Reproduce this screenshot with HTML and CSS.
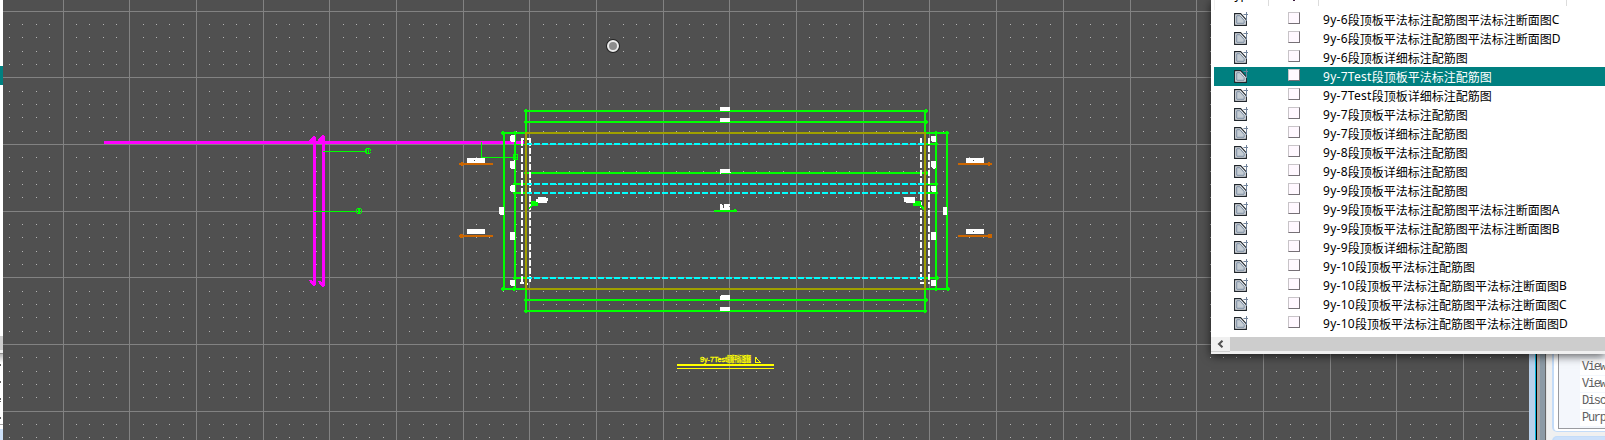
FILE: index.html
```
<!DOCTYPE html>
<html lang="zh">
<head>
<meta charset="utf-8">
<title>9y-7Test段顶板平法标注配筋图</title>
<link rel="stylesheet" href="styles.css">
</head>
<body>
<div class="workspace">
  <div class="left-edge">
    <div class="le-selected"></div>
    <div class="le-thumb"></div>
    <div class="le-frame"></div>
    <div class="le-list"><i></i><i></i><i class="colon"></i><i></i></div>
    <div class="le-foot"></div>
  </div>
  <svg class="drawing" viewBox="3 0 1526 440" width="1526" height="440" shape-rendering="crispEdges">
    <path id="dots" fill="#b4b4b4"/>
    <path id="grid" fill="#828282"/>
    <g fill="#ff00ff">
      <path d="M104 141h420v3H104zM313 137h3v148h-3zM322 136h3v149h-3z"/>
      <path d="M309 142v-2l4-4h2l1 2v4zM318 141v-2l4-4h2l1 2v4zM309 280h2l2 2h3v3l-2 1-3-2zM318 281h2l2 2h3v3l-2 1-3-2z"/>
    </g>
    <g fill="#00ff00">
      <path d="M323 151h43v1h-43zM314 211h42v1h-42zM481 142h1v16h-1zM481 157h32v1h-32z"/>
      <path d="M525 110h402v2H525zM525 121h402v2H525zM525 172h402v2H525zM526 299h400v2H526zM526 310h400v2H526z"/>
      <path d="M525 110h2v23h-2zM924 110h2v23h-2zM525 289h2v24h-2zM924 289h2v24h-2zM525 173h2v11h-2zM924 173h2v11h-2z"/>
      <path d="M503 132h2v158h-2zM514 132h2v158h-2zM935 132h2v158h-2zM946 132h2v158h-2z"/>
      <path d="M503 132h22v2h-22zM926 132h22v2h-22zM503 288h22v2h-22zM926 288h22v2h-22z"/>
      <path d="M514 144h11v1h-11zM514 183h11v2h-11zM514 192h11v2h-11zM514 277h13v2h-13zM926 143h11v2h-11zM926 183h11v2h-11zM926 192h11v2h-11zM924 277h13v2h-13z"/>
      <path d="M714 210h23v2h-23zM734 209h2v1h-2z"/>
      <path id="ticks"/>
      <path d="M366 148h4v1h-4zM365 149h2v4h-2zM366 153h4v1h-4zM368 148h1v6h-1zM370 149h1v2h-1zM370 152h1v1h-1z"/>
      <path d="M357 208h4v1h-4zM356 209h1v4h-1zM357 213h4v1h-4zM358 208h2v6h-2zM361 209h1v4h-1z"/>
    </g>
    <g fill="none" stroke="#00ff00">
      <path d="M513 154.500h4v5h-4zM513 157h5"/>
    </g>
    <g fill="none" stroke="#ffffff" stroke-width="2">
      <path d="M522 140v144M530 140v144M921 138v146M929 138v146" stroke-dasharray="6 2"/>
      <path d="M521 139h3M526 139h5M520 283h4M526 284h2M929 139h1M921 283h5M928 283h2"/>
    </g>
    <path fill="#a0a000" d="M525 132h401v158H525zM527 134v154h397V134z"/>
    <path fill="none" stroke="#00ffff" stroke-width="2" stroke-dasharray="6 2" stroke-dashoffset="1" d="M527 144h397M527 184h397M527 193h397M527 278h397"/>
    <path fill="#00ff00" d="M531 201h7v5h-5l-4 3-1-1 3-3zM913 201h8v4l3 3v2h-1l-4-4h-6z"/>
    <g fill="#ffffff">
      <path d="M720 107h10v4h-10zM720 118h10v4h-10zM720 169h10v3h1v1h-10v1h-1zM721 295h9v5h-10v-4h1zM720 307h10v4h-10z"/>
      <path d="M720 204h2v1h1v3h1v-4h6v2h-1v1h1v3h-10z"/>
      <path d="M511 135h4v7h-4l-1-1v-5zM510 161h4v-1l1 1v8h-3l-2-1zM510 186h1v-1h4v7h-4l-1-1zM499 207h5v8h-4l-1-1zM510 232h5v8h-5zM510 280h5v6h-4l-1-1z"/>
      <path d="M931 136h4l1 1v4l-1 1h-3l-1-1zM931 161h4l1 1v5l-2 2-3-2zM931 186h4l1 1v5h-4l-1-1zM943 207h4v8h-4zM931 232h5v7l-1 1h-4zM931 280h5v5l-1 1h-4z"/>
      <path d="M538 197h8v1h2v3h-1v2h-9v-1h-2v-3h2zM904 197h11v6h-9v-1h-2z"/>
      <path id="tags"/>
    </g>
    <path fill="#505050" d="M474 160h1v1h-1zM973 160h1v1h-1zM973 231h1v1h-1z"/>
    <path fill="#cc6600" d="M459 163h2v-1h2v1h30v2h-30v1h-2v-1h-2zM459 235l1-1h3v1h30v2h-30v1h-3l-1-1zM958 163h30v-1h2v1h2v2h-2v1h-2v-1h-30zM958 235h30v-1h3l1 1v2l-1 1h-3v-1h-30z"/>
    <g fill="#ffff00">
      <path d="M677 364h97v2h-97zM677 368h97v1h-97z"/>
      <path d="M755 357h1v1h1v1h1v1h1v1h1v1h1v1h-6zM756 359v3h3v-1h-1v-1h-1v-1z"/>
      <text class="caption" x="700" y="362" textLength="27" lengthAdjust="spacingAndGlyphs">9y-7Test</text>
      <text class="caption caption-cjk" x="727" y="362" textLength="24" lengthAdjust="spacingAndGlyphs">段顶板平法标注配筋图</text>
    </g>
    <circle cx="613" cy="46" r="5.500" shape-rendering="auto" fill="#8c8c8c" stroke="#242424" stroke-width="3"/>
    <circle cx="613" cy="46" r="5" shape-rendering="auto" fill="#8c8c8c" stroke="#ececec" stroke-width="2"/>
  </svg>
  <div class="splitter"><i class="s1"></i><i class="s2"></i><i class="s3"></i><i class="s4"></i><i class="s5"></i><i class="s6"></i></div>
  <div class="side">
    <div class="group">
      <div class="props"><div>View</div><div>View</div><div>Disc</div><div>Purp</div></div>
    </div>
    <div class="group next"></div>
  </div>
</div>

<div class="browser">
  <div class="head"><span class="h-type">Type</span><span class="h-check"></span><span class="h-name"></span></div>
  <div class="rows" id="rows"></div>
  <div class="scroll">
    <div class="arrow"><svg width="7" height="8" viewBox="0 0 7 8"><path d="M5.500 .7 2 4l3.500 3.300" fill="none" stroke="#505050" stroke-width="2"/></svg></div>
    <div class="thumb"></div>
  </div>
</div>
<script src="app.js"></script>
</body>
</html>
```
FILE: styles.css
```
body { margin: 0; width: 1605px; height: 440px; overflow: hidden; position: relative; background: #f0f0f0; font-family: "Noto Sans", "Noto Sans CJK SC", sans-serif; }
.workspace { display: flex; height: 440px; }
.left-edge { width: 3px; height: 440px; flex: none; background: #fff; display: flex; flex-direction: column; overflow: hidden; }
.le-selected { height: 19px; margin-top: 66px; background: #008080; flex: none; }
.le-thumb { height: 14px; margin-top: 251px; background: #cdcdcd; flex: none; }
.le-frame { height: 13px; flex: none; background: linear-gradient(#f0f0f0 0 3px, #8c8c8c 3px 4px, #b8b8b8 4px, #fff); }
.le-list { height: 62px; flex: none; border-bottom: 1px solid #a0a0a0; display: flex; flex-direction: column; gap: 15px; padding-top: 1px; box-sizing: border-box; }
.le-list i { width: 1px; height: 2px; background: #606060; flex: none; }
.le-list i.colon { height: 4px; background: linear-gradient(#606060 0 2px, #fff 2px 3px, #606060 3px); }
.le-foot { flex: 1; margin-top: 4px; background: #cce0f8; }
.drawing { flex: none; display: block; background: #505050; }
.caption { font: 8px "Liberation Sans", sans-serif; stroke: #ffff00; stroke-width: .3px; }
.caption-cjk { font: bold 8px "Noto Sans CJK SC", sans-serif; }
.splitter { display: flex; flex: none; }
.splitter i { height: 440px; }
.s1 { width: 6px; background: #bad1ea; }
.s2 { width: 1px; background: #00b4dc; }
.s3 { width: 1px; background: #000; }
.s4 { width: 3px; background: #aea6a3; }
.s5 { width: 5px; background: #8c9aa5; }
.s6 { width: 2px; background: linear-gradient(90deg, #666 1px, #e4e4e4 1px); }
.side { flex: 1; padding: 300px 0 0 5px; overflow: hidden; box-sizing: border-box; background: #f0f0f0; }
.group { height: 132px; box-sizing: border-box; border: 1px solid #c4dcf8; border-left-width: 2px; border-right: 0; border-bottom-left-radius: 5px; background: #fff; padding: 0 0 3px 4px; }
.group.next { margin-top: 4px; background: #cce0fa; border-radius: 5px 0 0 0; }
.props { height: 128px; box-sizing: border-box; border: 1px solid #999ba0; border-right: 0; border-top: 0; background: #f4f7fc; padding: 58px 0 0 21px; font: 12px/17px "Liberation Mono", monospace; letter-spacing: -1.3px; color: #606060; display: flex; flex-direction: column; gap: 1px; }
.props div { height: 16px; background: #fff; padding-left: 2px; flex: none; }
.browser { position: absolute; left: 1211px; top: 0; width: 394px; height: 354px; background: #fff; box-shadow: 0 2px 9px rgba(0,0,0,.65); display: flex; flex-direction: column; }
.head { height: 10px; overflow: hidden; display: flex; font-size: 12px; flex: none; background: linear-gradient(90deg, #fff 0 3px, #f0f0f0 3px 4px, #fff 4px); }
.head span { height: 6px; border-right: 1px solid #dcdcdc; box-sizing: border-box; }
.h-type { width: 58px; padding-left: 17px; line-height: 16px; margin-top: -13px; }
.head .h-type { height: 19px; }
.h-check { width: 50px; background: linear-gradient(#402040, #402040) 24px 0 / 2px 1px no-repeat; }
.h-name { width: 248px; }
.row { height: 19px; margin-left: 3px; display: flex; align-items: flex-start; font-size: 12px; line-height: 19px; color: #000; }
.row.selected { background: #008080; color: #fff; }
.icon { width: 14px; height: 14px; margin: 2px 0 0 20px; flex: none; }
.box { width: 12px; height: 12px; box-sizing: border-box; background: #fff8ff; border: 1px solid #c8c4c8; border-right: 1px solid #767076; border-bottom: 1px solid #767076; margin: 2px 23px 0 40px; flex: none; }
.name { white-space: nowrap; display: flex; }
.latin { letter-spacing: .28px; }
.cjk { font-family: "Noto Sans CJK SC", sans-serif; }
.scroll { margin-top: 4px; height: 17px; display: flex; background: #f0f0f0; flex: none; }
.arrow { width: 19px; height: 15px; padding-right: 1px; padding-bottom: 1px; box-sizing: border-box; display: flex; align-items: center; justify-content: center; border-bottom: 1px solid #d0d0d0; }
.thumb { flex: 1; height: 14px; background: #cdcdcd; }
```
FILE: app.js
```
// Drawing grid: major lines with four snap dots in between.
const pitch = 66.69, rowPitch = 66.67;
let grid = '', dots = '';
for (let i = 0; i < 23; i++) grid += `M${Math.floor(63 + pitch * i)} 0h1v440h-1z`;
for (let j = 0; j < 7; j++) grid += `M3 ${Math.floor(11 + rowPitch * j)}h1526v1H3z`;
for (let i = -5; i < 112; i++) {
  if (i % 5 === 0) continue;
  for (let j = 0; j < 33; j++) {
    if (j % 5 === 0) continue;
    dots += `M${Math.floor(63.01 + pitch * i / 5)} ${Math.floor(11.01 + rowPitch * j / 5)}h1v1h-1z`;
  }
}
document.getElementById('grid').setAttribute('d', grid);
document.getElementById('dots').setAttribute('d', dots);

// Dimension ticks at line ends.
const ticks = [[526,111],[526,122],[503,133],[515,133],[526,173],[515,184],[515,193],[515,278],[503,289],[514,289],[526,300],[526,311],
  [926,111],[926,122],[936,133],[947,133],[926,173],[936,144],[936,184],[936,193],[937,278],[936,289],[948,289],[926,300],[925,311]];
document.getElementById('ticks').setAttribute('d', ticks.map(([x, y]) => `M${x - 1} ${y - 2}h2v1h1v2h-1v1h-2v-1h-1v-2h1z`).join(''));

// Section mark tags.
document.getElementById('tags').setAttribute('d', [[467,158],[467,229],[966,158],[966,229]]
  .map(([x, y]) => `M${x} ${y}h18v5h-18z`).join(''));

const items = [
  ['9y-6', '段顶板平法标注配筋图平法标注断面图', 'C'],
  ['9y-6', '段顶板平法标注配筋图平法标注断面图', 'D'],
  ['9y-6', '段顶板详细标注配筋图', ''],
  ['9y-7Test', '段顶板平法标注配筋图', ''],
  ['9y-7Test', '段顶板详细标注配筋图', ''],
  ['9y-7', '段顶板平法标注配筋图', ''],
  ['9y-7', '段顶板详细标注配筋图', ''],
  ['9y-8', '段顶板平法标注配筋图', ''],
  ['9y-8', '段顶板详细标注配筋图', ''],
  ['9y-9', '段顶板平法标注配筋图', ''],
  ['9y-9', '段顶板平法标注配筋图平法标注断面图', 'A'],
  ['9y-9', '段顶板平法标注配筋图平法标注断面图', 'B'],
  ['9y-9', '段顶板详细标注配筋图', ''],
  ['9y-10', '段顶板平法标注配筋图', ''],
  ['9y-10', '段顶板平法标注配筋图平法标注断面图', 'B'],
  ['9y-10', '段顶板平法标注配筋图平法标注断面图', 'C'],
  ['9y-10', '段顶板平法标注配筋图平法标注断面图', 'D']
];
const icon = '<svg class="icon" viewBox="0 0 14 14"><path d="M.6 1.600h6L12.400 8v5.400H.6z" fill="#e4e8ec" stroke="#20262c" stroke-width="1.100"/><path d="M2.700 3.700h3.200L10.200 8.500v2.800H2.700z" fill="#c5cdd4" stroke="#71839a" stroke-width=".9"/><path d="M9.500 2.500H14M12.500 0v9" fill="none" stroke="#71839a"/></svg>';
document.getElementById('rows').innerHTML = items.map(([a, b, c], i) =>
  `<div class="row${i === 3 ? ' selected' : ''}">${icon}<span class="box"></span><span class="name"><span class="latin">${a}</span><span class="cjk">${b}</span><span class="latin">${c}</span></span></div>`).join('');
```
